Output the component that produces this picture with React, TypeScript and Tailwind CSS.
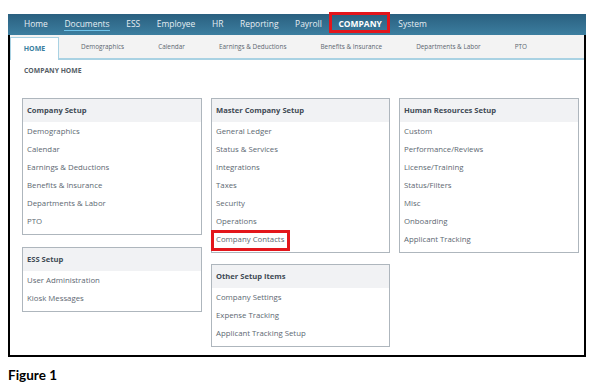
import React from "react";

const nav = ["Home", "Documents", "ESS", "Employee", "HR", "Reporting", "Payroll", "COMPANY", "System"];
const tabs = ["Demographics", "Calendar", "Earnings & Deductions", "Benefits & Insurance", "Departments & Labor", "PTO"];

function Card({ title, items, highlight }: { title: string; items: string[]; highlight?: string }) {
  return (
    <div className="border border-[#aeb6bd] bg-white pb-[4px]">
      <div className="h-[23px] bg-[#f1f2f4] flex items-center pl-[4px] pt-[1px] text-[7.6px] font-bold text-[#3f4a55]">{title}</div>
      {items.map((it) => (
        <div key={it} className="relative h-[18px] flex items-center pl-[4px] pt-[1px] text-[7.8px] text-[#5d6872]">
          {it}
          {it === highlight && (
            <span className="absolute left-[-1px] top-0 w-[79px] h-[21px] border-[3px] border-[#e3161b]" />
          )}
        </div>
      ))}
    </div>
  );
}

export default function App() {
  return (
    <div className="w-[597px] h-[388px] bg-white relative" style={{ fontFamily: '"Open Sans", sans-serif' }}>
      <div className="pt-[14px] pl-[8px]">
        <div className="w-[578px] h-[343px] border-2 border-t-0 border-black flex flex-col">
          {/* nav */}
          <div className="h-[21px] bg-linear-to-b from-[#2a6080] to-[#3c7e9f] flex items-center gap-[16.6px] text-[8.45px] text-[#e6eef3] -mx-[2px] pl-[16px]">
            {nav.map((n) => (
              <div key={n} className="relative flex items-center h-full">
                {n === "COMPANY" ? (
                  <span className="font-bold text-white">{n}</span>
                ) : n === "Documents" ? (
                  <span className="border-b border-[#6fc3ea] leading-[12px]">{n}</span>
                ) : (
                  <span>{n}</span>
                )}
                {n === "COMPANY" && (
                  <span className="absolute left-[-9px] right-[-8px] top-[-2px] bottom-[2px] border-[3px] border-[#e3161b]" />
                )}
              </div>
            ))}
          </div>
          {/* tabs */}
          <div className="h-[25px] bg-[#f3f3f3] border-b-2 border-[#a9d2e3] flex items-end text-[6.4px] text-[#5c6670]">
            <div className="w-[49px] h-[23px] bg-white border border-b-0 border-[#a9d2e3] -mb-[2px] flex items-center justify-center font-bold text-[#3b7fa0] text-[7px]">
              HOME
            </div>
            <div className="flex items-center h-full gap-[34px] ml-[22px]">
              {tabs.map((t) => (
                <div key={t} className="whitespace-nowrap">{t}</div>
              ))}
            </div>
          </div>
          <div className="pl-[14px] pt-[6px] text-[6.8px] font-bold text-[#555e66]">COMPANY HOME</div>
          {/* cards */}
          <div className="flex gap-[9px] pl-[12px] pt-[22px]">
            <div className="w-[180px] flex flex-col gap-[12px]">
              <Card title="Company Setup" items={["Demographics", "Calendar", "Earnings & Deductions", "Benefits & Insurance", "Departments & Labor", "PTO"]} />
              <Card title="ESS Setup" items={["User Administration", "Kiosk Messages"]} />
            </div>
            <div className="w-[179px] flex flex-col gap-[11px]">
              <Card title="Master Company Setup" items={["General Ledger", "Status & Services", "Integrations", "Taxes", "Security", "Operations", "Company Contacts"]} highlight="Company Contacts" />
              <Card title="Other Setup Items" items={["Company Settings", "Expense Tracking", "Applicant Tracking Setup"]} />
            </div>
            <div className="w-[180px] flex flex-col">
              <Card title="Human Resources Setup" items={["Custom", "Performance/Reviews", "License/Training", "Status/Filters", "Misc", "Onboarding", "Applicant Tracking"]} />
            </div>
          </div>
        </div>
      </div>
      <div className="pl-[8px] pt-[8px] text-[13.5px] font-bold text-black" style={{ fontFamily: "Lato, sans-serif" }}>
        Figure 1
      </div>
    </div>
  );
}
